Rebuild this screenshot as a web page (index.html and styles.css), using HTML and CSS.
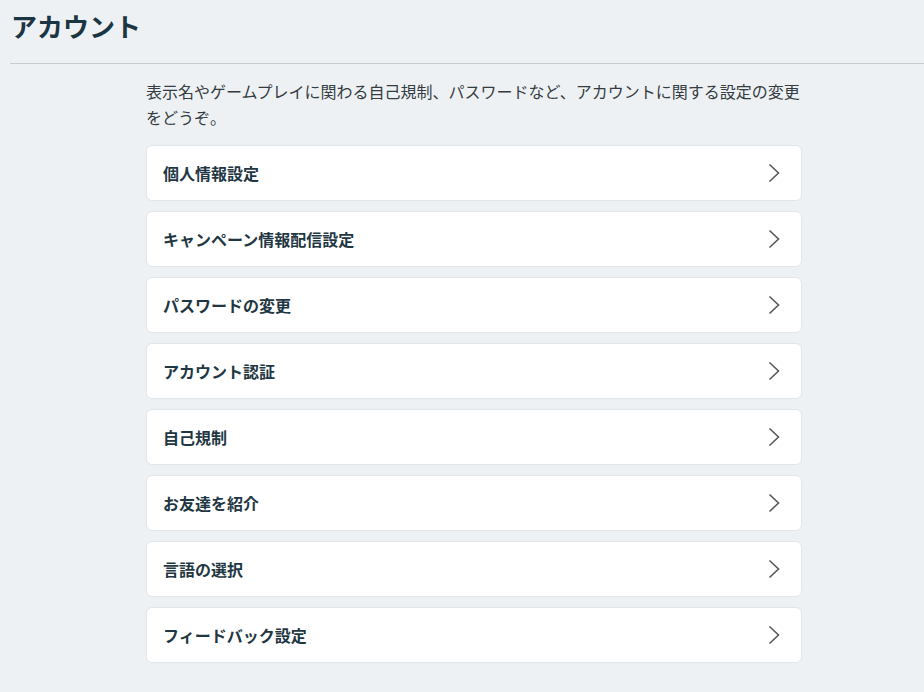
FILE: index.html
```html
<!DOCTYPE html>
<html lang="ja">
<head>
<meta charset="utf-8">
<link rel="stylesheet" href="styles.css">
</head>
<body>
<header class="page-header">
  <h1 class="page-title">アカウント</h1>
</header>
<main class="content">
  <p class="intro">表示名やゲームプレイに関わる自己規制、パスワードなど、アカウントに関する設定の変更をどうぞ。</p>
  <ul class="menu">
    <li class="menu-item"><span class="label">個人情報設定</span><svg class="chev" viewBox="0 0 12 20"><path d="M1.5 1.5 L10.5 10 L1.5 18.5"/></svg></li>
    <li class="menu-item"><span class="label">キャンペーン情報配信設定</span><svg class="chev" viewBox="0 0 12 20"><path d="M1.5 1.5 L10.5 10 L1.5 18.5"/></svg></li>
    <li class="menu-item"><span class="label">パスワードの変更</span><svg class="chev" viewBox="0 0 12 20"><path d="M1.5 1.5 L10.5 10 L1.5 18.5"/></svg></li>
    <li class="menu-item"><span class="label">アカウント認証</span><svg class="chev" viewBox="0 0 12 20"><path d="M1.5 1.5 L10.5 10 L1.5 18.5"/></svg></li>
    <li class="menu-item"><span class="label">自己規制</span><svg class="chev" viewBox="0 0 12 20"><path d="M1.5 1.5 L10.5 10 L1.5 18.5"/></svg></li>
    <li class="menu-item"><span class="label">お友達を紹介</span><svg class="chev" viewBox="0 0 12 20"><path d="M1.5 1.5 L10.5 10 L1.5 18.5"/></svg></li>
    <li class="menu-item"><span class="label">言語の選択</span><svg class="chev" viewBox="0 0 12 20"><path d="M1.5 1.5 L10.5 10 L1.5 18.5"/></svg></li>
    <li class="menu-item"><span class="label">フィードバック設定</span><svg class="chev" viewBox="0 0 12 20"><path d="M1.5 1.5 L10.5 10 L1.5 18.5"/></svg></li>
  </ul>
</main>
</body>
</html>
```
FILE: styles.css
```css
html, body {
  margin: 0;
  padding: 0;
  background: #eef1f3;
  font-family: "Noto Sans CJK JP", "Noto Sans", sans-serif;
}
.page-header {
  margin-left: 10px;
  border-bottom: 1px solid #c8cccf;
  height: 64px;
  box-sizing: border-box;
}
.page-title {
  margin: 0;
  padding-top: 8px;
  padding-left: 1px;
  font-size: 26px;
  line-height: 36px;
  font-weight: 700;
  color: #1b3542;
}
.content {
  width: 656px;
  margin-left: 146px;
  padding-top: 14px;
}
.intro {
  margin: 0 0 15px;
  font-size: 16px;
  line-height: 26px;
  color: #333c42;
}
.menu {
  list-style: none;
  margin: 0;
  padding: 0;
  display: flex;
  flex-direction: column;
  gap: 10px;
}
.menu-item {
  height: 56px;
  box-sizing: border-box;
  background: #fff;
  border: 1px solid #e2e6e8;
  border-radius: 6px;
  display: flex;
  align-items: center;
  justify-content: space-between;
  padding: 0 21px 0 16px;
}
.label {
  font-size: 16px;
  font-weight: 700;
  color: #1f3743;
}
.chev {
  width: 12px;
  height: 20px;
  fill: none;
  stroke: #555a5e;
  stroke-width: 1.6;
}
```
